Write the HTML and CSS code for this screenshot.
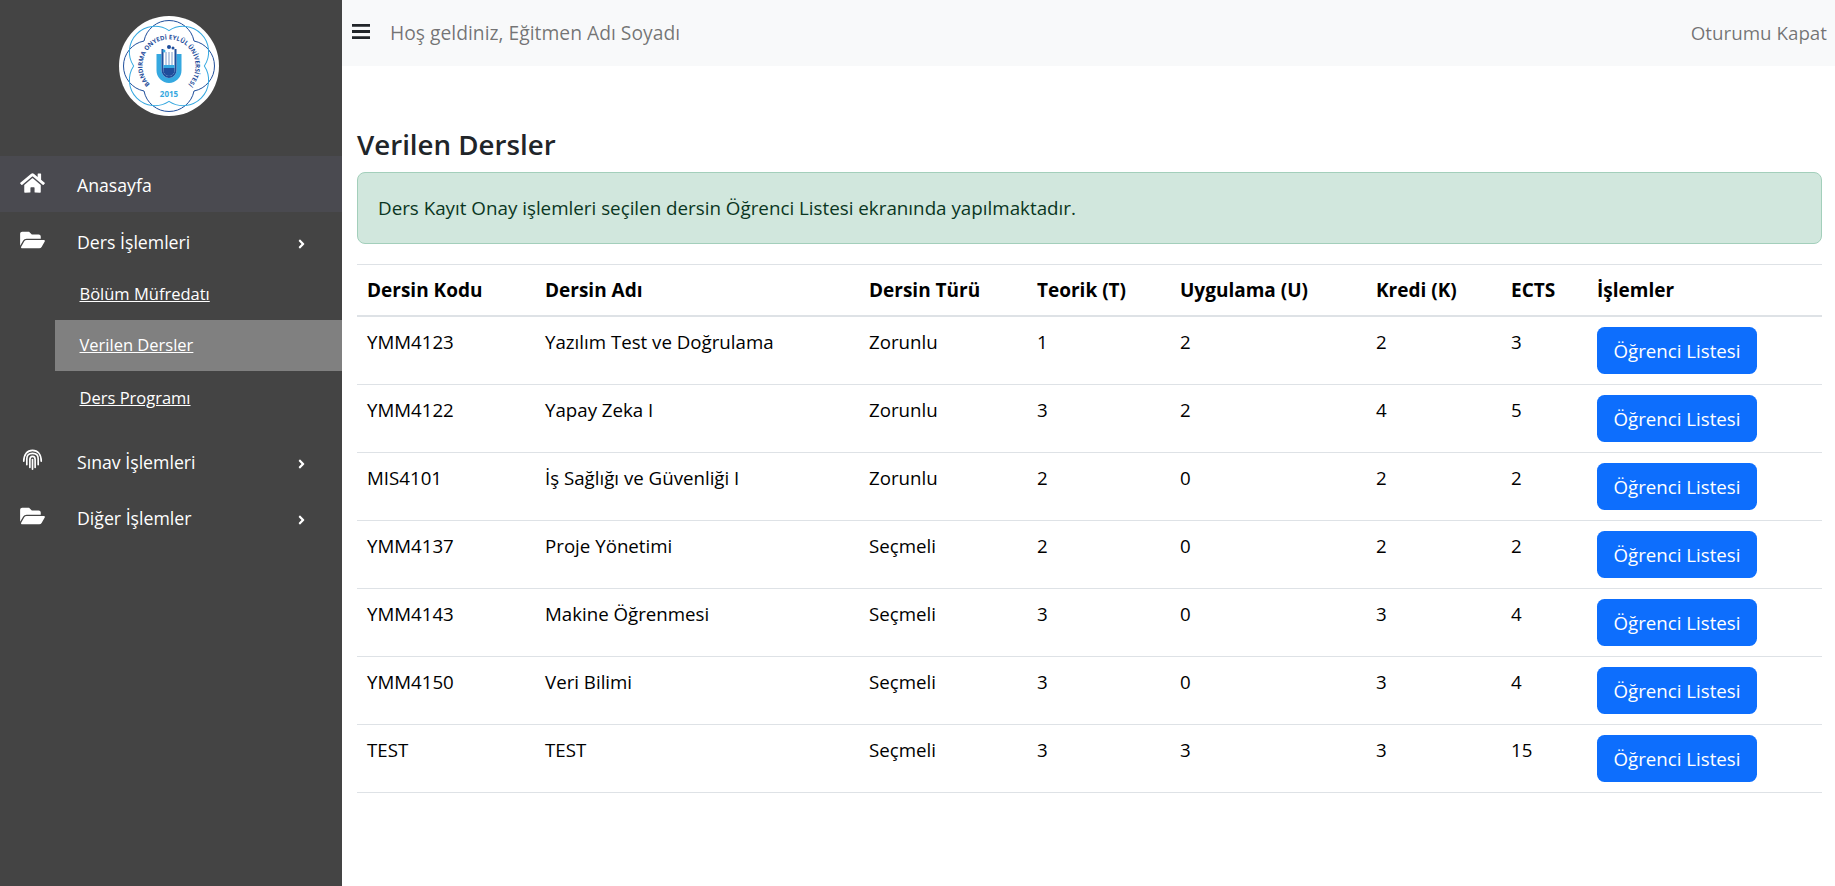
FILE: index.html
```html
<!DOCTYPE html>
<html lang="tr">
<head>
<meta charset="utf-8">
<title>Verilen Dersler</title>
<link rel="stylesheet" href="styles.css">
</head>
<body>
<aside class="sidebar">
  <div class="logo-wrap">
    <svg class="logo" viewBox="0 0 100 100" aria-label="Bandırma Onyedi Eylül Üniversitesi">
      <circle cx="50" cy="50" r="50" fill="#fff"/>
      <path class="rosette dark" d="M25 25A25.500 25.500 0 0 1 75 25A25.500 25.500 0 0 1 75 75A25.500 25.500 0 0 1 25 75A25.500 25.500 0 0 1 25 25Z"/>
      <path class="rosette light" transform="rotate(45 50 50)" d="M25 25A25.500 25.500 0 0 1 75 25A25.500 25.500 0 0 1 75 75A25.500 25.500 0 0 1 25 75A25.500 25.500 0 0 1 25 25Z"/>
      <defs><path id="logoArc" d="M33.600 70.700A26.500 26.500 0 1 1 66.400 70.700"/></defs>
      <text class="logo-arc"><textPath href="#logoArc" startOffset="50%" text-anchor="middle">BANDIRMA ONYEDİ EYLÜL ÜNİVERSİTESİ</textPath></text>
      <path d="M37.500 38h5v16.500a7.500 7.500 0 0 0 15 0V38h5v16.500a12.500 12.500 0 0 1-25 0z" fill="#35a8e0"/>
      <path d="M42.500 33h2v21.500a5.500 5.500 0 0 0 11 0V33h2v21.500a7.500 7.500 0 0 1-15 0z" fill="#1f4e9c"/>
      <path d="M46.500 36h1v13h-1zM49.500 36h1v13h-1zM52.500 36h1v13h-1z" fill="#7f9cc9"/>
      <path d="M44.500 49h11v3h-11z" fill="#35a8e0"/>
      <path d="M44.500 52h11v2.500a5.500 5.500 0 0 1-11 0z" fill="#1f4e9c"/>
      <circle cx="50" cy="31" r="2" fill="#1f4e9c"/><circle cx="45" cy="35" r="1.500" fill="#35a8e0"/><circle cx="54" cy="32" r="1.500" fill="#1f4e9c"/>
      <text class="logo-year" x="50" y="81" text-anchor="middle">2015</text>
    </svg>
  </div>
  <nav class="side-nav">
    <a class="side-link active"><svg class="side-icon" viewBox="0 0 576 512"><path d="M280.37 148.26L96 300.11V464a16 16 0 0 0 16 16l112.06-.29a16 16 0 0 0 15.92-16V368a16 16 0 0 1 16-16h64a16 16 0 0 1 16 16v95.64a16 16 0 0 0 16 16.05L464 480a16 16 0 0 0 16-16V300L295.67 148.26a12.19 12.19 0 0 0-15.3 0zM571.6 251.47L488 182.56V44.05a12 12 0 0 0-12-12h-56a12 12 0 0 0-12 12v72.61L318.47 43a48 48 0 0 0-61 0L4.34 251.47a12 12 0 0 0-1.6 16.9l25.5 31A12 12 0 0 0 45.15 301l235.22-193.74a12.19 12.19 0 0 1 15.3 0L530.9 301a12 12 0 0 0 16.9-1.6l25.5-31a12 12 0 0 0-1.7-16.93z"/></svg><span>Anasayfa</span></a>
    <a class="side-link"><svg class="side-icon" viewBox="0 0 576 512"><path d="M572.694 292.093L500.27 416.248A63.997 63.997 0 0 1 444.989 448H45.025c-18.523 0-30.064-20.093-20.731-36.093l72.424-124.155A64 64 0 0 1 152 256h399.964c18.523 0 30.064 20.093 20.73 36.093zM152 224h328v-48c0-26.51-21.49-48-48-48H272l-64-64H48C21.49 64 0 85.49 0 112v278.046l69.077-118.418C86.214 242.25 117.989 224 152 224z"/></svg><span>Ders İşlemleri</span><svg class="side-arrow" viewBox="0 0 256 512"><path d="M224.3 273l-136 136c-9.4 9.4-24.6 9.4-33.9 0l-22.6-22.6c-9.4-9.4-9.4-24.6 0-33.9l96.4-96.4-96.4-96.4c-9.4-9.4-9.4-24.6 0-33.9L54.3 103c9.4-9.4 24.6-9.4 33.9 0l136 136c9.5 9.4 9.5 24.6.1 34z"/></svg></a>
    <div class="sub-nav">
      <a class="sub-link">Bölüm Müfredatı</a>
      <a class="sub-link current">Verilen Dersler</a>
      <a class="sub-link">Ders Programı</a>
    </div>
    <a class="side-link"><svg class="side-icon print" viewBox="0 0 24 24"><g fill="none" stroke="#fff" stroke-width="1.900" stroke-linecap="round"><path d="M2 14C2 6 6 1.500 12 1.500S22 6 22 14"/><path d="M5.500 18V11C5.500 7 8 5 12 5s6.500 2 6.500 6v7"/><path d="M9 21V12c0-2 1-3.500 3-3.500s3 1.500 3 3.500v9"/><path d="M12 12v11"/></g></svg><span>Sınav İşlemleri</span><svg class="side-arrow" viewBox="0 0 256 512"><path d="M224.3 273l-136 136c-9.4 9.4-24.6 9.4-33.9 0l-22.6-22.6c-9.4-9.4-9.4-24.6 0-33.9l96.4-96.4-96.4-96.4c-9.4-9.4-9.4-24.6 0-33.9L54.3 103c9.4-9.4 24.6-9.4 33.9 0l136 136c9.5 9.4 9.5 24.6.1 34z"/></svg></a>
    <a class="side-link"><svg class="side-icon" viewBox="0 0 576 512"><path d="M572.694 292.093L500.27 416.248A63.997 63.997 0 0 1 444.989 448H45.025c-18.523 0-30.064-20.093-20.731-36.093l72.424-124.155A64 64 0 0 1 152 256h399.964c18.523 0 30.064 20.093 20.73 36.093zM152 224h328v-48c0-26.51-21.49-48-48-48H272l-64-64H48C21.49 64 0 85.49 0 112v278.046l69.077-118.418C86.214 242.25 117.989 224 152 224z"/></svg><span>Diğer İşlemler</span><svg class="side-arrow" viewBox="0 0 256 512"><path d="M224.3 273l-136 136c-9.4 9.4-24.6 9.4-33.9 0l-22.6-22.6c-9.4-9.4-9.4-24.6 0-33.9l96.4-96.4-96.4-96.4c-9.4-9.4-9.4-24.6 0-33.9L54.3 103c9.4-9.4 24.6-9.4 33.9 0l136 136c9.5 9.4 9.5 24.6.1 34z"/></svg></a>
  </nav>
</aside>
<div class="page">
  <header class="topbar">
    <svg class="bars" viewBox="0 0 18 15"><path d="M0 0h18v2.800H0zM0 6.100h18v2.800H0zM0 12.200h18V15H0z"/></svg>
    <span class="welcome">Hoş geldiniz, Eğitmen Adı Soyadı</span>
    <a class="logout">Oturumu Kapat</a>
  </header>
  <main class="content">
    <h1 class="title">Verilen Dersler</h1>
    <div class="alert">Ders Kayıt Onay işlemleri seçilen dersin Öğrenci Listesi ekranında yapılmaktadır.</div>
    <table class="courses">
      <colgroup>
        <col class="c1"><col class="c2"><col class="c3"><col class="c4"><col class="c5"><col class="c6"><col class="c7"><col class="c8">
      </colgroup>
      <thead>
        <tr><th>Dersin Kodu</th><th>Dersin Adı</th><th>Dersin Türü</th><th>Teorik (T)</th><th>Uygulama (U)</th><th>Kredi (K)</th><th>ECTS</th><th>İşlemler</th></tr>
      </thead>
      <tbody>
        <tr><td>YMM4123</td><td>Yazılım Test ve Doğrulama</td><td>Zorunlu</td><td>1</td><td>2</td><td>2</td><td>3</td><td><a class="btn">Öğrenci Listesi</a></td></tr>
        <tr><td>YMM4122</td><td>Yapay Zeka I</td><td>Zorunlu</td><td>3</td><td>2</td><td>4</td><td>5</td><td><a class="btn">Öğrenci Listesi</a></td></tr>
        <tr><td>MIS4101</td><td>İş Sağlığı ve Güvenliği I</td><td>Zorunlu</td><td>2</td><td>0</td><td>2</td><td>2</td><td><a class="btn">Öğrenci Listesi</a></td></tr>
        <tr><td>YMM4137</td><td>Proje Yönetimi</td><td>Seçmeli</td><td>2</td><td>0</td><td>2</td><td>2</td><td><a class="btn">Öğrenci Listesi</a></td></tr>
        <tr><td>YMM4143</td><td>Makine Öğrenmesi</td><td>Seçmeli</td><td>3</td><td>0</td><td>3</td><td>4</td><td><a class="btn">Öğrenci Listesi</a></td></tr>
        <tr><td>YMM4150</td><td>Veri Bilimi</td><td>Seçmeli</td><td>3</td><td>0</td><td>3</td><td>4</td><td><a class="btn">Öğrenci Listesi</a></td></tr>
        <tr><td>TEST</td><td>TEST</td><td>Seçmeli</td><td>3</td><td>3</td><td>3</td><td>15</td><td><a class="btn">Öğrenci Listesi</a></td></tr>
      </tbody>
    </table>
  </main>
</div>
</body>
</html>
```
FILE: styles.css
```css
* { box-sizing: border-box; }
body {
  margin: 0;
  display: flex;
  min-height: 886px;
  font-family: "Open Sans", "Noto Sans", sans-serif;
  font-size: 18.8px;
  line-height: 30px;
  color: #000;
  background: #fff;
}
.sidebar { width: 342px; flex: none; background: #444; color: #fff; }
.logo-wrap { height: 156px; padding: 16px 4px 0 0; display: flex; justify-content: center; align-items: flex-start; }
.logo { width: 100px; height: 100px; display: block; }
.rosette { fill: none; stroke-width: 1; }
.rosette.dark { stroke: #1f4e9c; }
.rosette.light { stroke: #35a8e0; }
.logo-arc { font: 700 6.200px "Open Sans", sans-serif; fill: #1f4e9c; }
.logo-year { font: 700 8px "Open Sans", sans-serif; fill: #35a8e0; }
.side-nav { display: flex; flex-direction: column; }
.side-link { display: flex; align-items: center; height: 56px; padding: 3px 0 0 20px; font-size: 17.7px; position: relative; }
.side-link.active { background: #4a4a50; padding-top: 1px; }
.side-link span { margin-left: 32px; }
.side-icon { width: 25px; height: 22px; fill: #fff; flex: none; margin-top: -4px; }
.side-icon.print { width: 21px; height: 21px; margin: -4px 2px 0 2px; }
.side-arrow { width: 7px; height: 14px; fill: #fff; position: absolute; left: 298px; top: 25px; }
.sub-nav { display: flex; flex-direction: column; padding: 1px 0 8px 55px; }
.sub-link { height: 51px; padding: 0 0 1px 24.500px; display: flex; align-items: center; font-size: 16.500px; color: #fff; text-decoration: underline; }
.sub-link.current { background: #808080; }
.sub-link.current + .sub-link { height: 53px; padding-top: 1px; }
.page { flex: 1; min-width: 0; }
.topbar { height: 66px; background: #f8f9fa; display: flex; align-items: center; padding: 0 8px 0 10px; color: rgba(0,0,0,.55); }
.bars { width: 18px; height: 15px; fill: #212529; flex: none; margin-top: -3px; }
.welcome { margin-left: 20px; font-size: 19.300px; }
.logout { margin-left: auto; }
.content { padding: 60px 13px 0 15px; }
.title { margin: 0 0 10px; font-size: 27.700px; line-height: 36px; font-weight: 600; color: #212529; }
.alert { height: 72px; padding: 20px; margin-bottom: 20px; background: #d1e7dd; border: 1px solid #a3cfbb; border-radius: 8px; color: #0a3622; }
.courses { width: 100%; table-layout: fixed; border-collapse: separate; border-spacing: 0; border-top: 1px solid #dee2e6; }
.c1 { width: 178px; } .c2 { width: 324px; } .c3 { width: 168px; } .c4 { width: 143px; }
.c5 { width: 196px; } .c6 { width: 135px; } .c7 { width: 86px; } .c8 { width: 235px; }
.courses th { height: 52px; text-align: left; padding: 10px; font-size: 19px; font-weight: 700; border-bottom: 2px solid #dee2e6; vertical-align: bottom; }
.courses td { height: 68px; padding: 10px; vertical-align: top; border-bottom: 1px solid #dee2e6; font-size: 18.700px; }
.btn { display: inline-block; width: 160px; height: 47px; line-height: 48px; text-align: center; background: #0d6efd; color: #fff; border-radius: 7.500px; vertical-align: top; }
```
